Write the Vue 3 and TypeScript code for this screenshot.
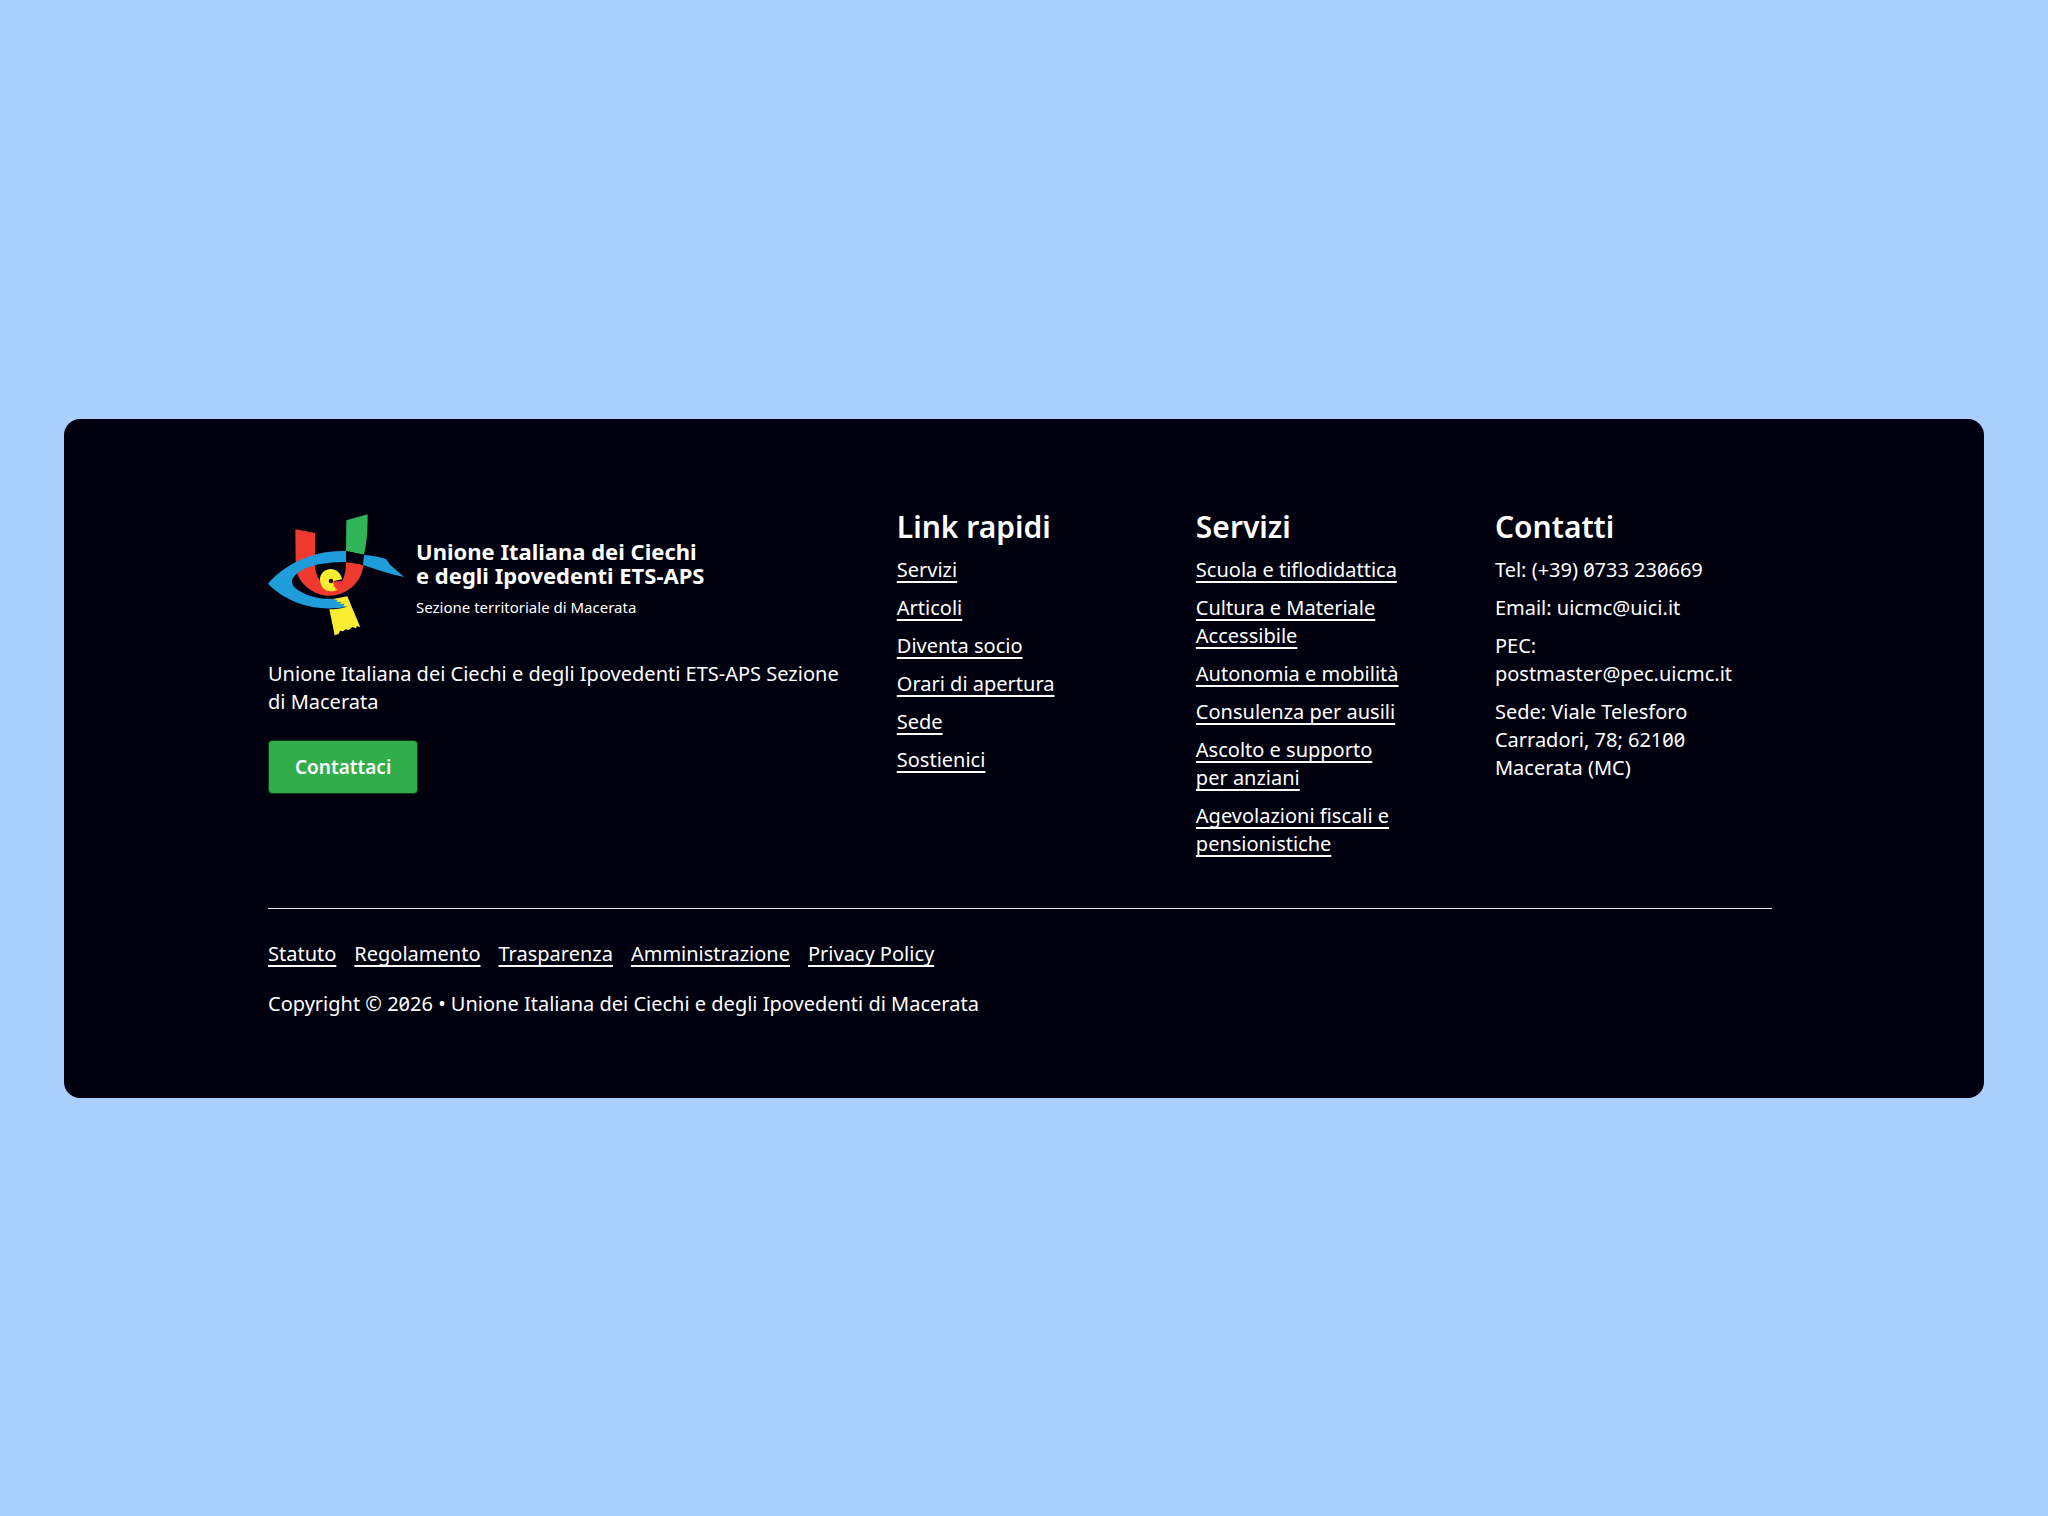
<script setup lang="ts">
interface NavLink {
  lines: string[]
  href: string
}

const quickLinks: NavLink[] = [
  { lines: ['Servizi'], href: '#servizi' },
  { lines: ['Articoli'], href: '#articoli' },
  { lines: ['Diventa socio'], href: '#diventa-socio' },
  { lines: ['Orari di apertura'], href: '#orari' },
  { lines: ['Sede'], href: '#sede' },
  { lines: ['Sostienici'], href: '#sostienici' },
]

const services: NavLink[] = [
  { lines: ['Scuola e tiflodidattica'], href: '#scuola' },
  { lines: ['Cultura e Materiale', 'Accessibile'], href: '#cultura' },
  { lines: ['Autonomia e mobilità'], href: '#autonomia' },
  { lines: ['Consulenza per ausili'], href: '#ausili' },
  { lines: ['Ascolto e supporto', 'per anziani'], href: '#anziani' },
  { lines: ['Agevolazioni fiscali e', 'pensionistiche'], href: '#agevolazioni' },
]

const contacts: string[][] = [
  ['Tel: (+39) 0733 230669'],
  ['Email: uicmc@uici.it'],
  ['PEC:', 'postmaster@pec.uicmc.it'],
  ['Sede: Viale Telesforo', 'Carradori, 78; 62100', 'Macerata (MC)'],
]

const legalLinks: NavLink[] = [
  { lines: ['Statuto'], href: '#statuto' },
  { lines: ['Regolamento'], href: '#regolamento' },
  { lines: ['Trasparenza'], href: '#trasparenza' },
  { lines: ['Amministrazione'], href: '#amministrazione' },
  { lines: ['Privacy Policy'], href: '#privacy' },
]

const columns = [
  { title: 'Link rapidi', links: quickLinks },
  { title: 'Servizi', links: services },
]
</script>

<template>
  <div class="page">
    <footer class="footer">
      <div class="top">
        <section class="about">
          <a class="brand" href="#home">
            <svg class="mark" viewBox="36 38 408 366" aria-hidden="true">
              <path fill="#f0392f" d="M118 84 L177 95 L177 192 C178 212 184 230 195 240 L258 240 C266 226 270 208 270 183 L322 190 C318 245 270 283 218 283 C166 281 120 240 119 190 Z" />
              <path fill="#2fb457" d="M271 57 L335 39 C335 85 333 120 324 160 L270 149 Z" />
              <path fill="#1f9ddb" d="M36 247 C80 195 165 145 270 149 L270 182 C215 182 150 190 118 221 C105 234 105 247 117 259 C145 283 190 295 236 292 L272 316 C240 323 195 323 160 315 C110 303 65 278 36 247 Z" />
              <path fill="#00000f" d="M270 149 L324 160 L321 192 C305 184 288 182 270 182 Z" />
              <path fill="#1f9ddb" d="M324 161 C350 163 370 166 391 174 L403 191 L444 227 C400 219 360 204 321 191 Z" />
              <path fill="#f9ed32" d="M232 293 L274 285 L313 378 L303 374 L300 381 L289 377 L279 386 L268 384 L262 390 L252 388 L248 398 L236 402 L220 324 C238 324 254 322 273 316 L261 313 L264 308 L250 307 L256 302 L240 301 L245 297 Z" />
              <path fill="#f9ed32" d="M258 234 C255 214 239 202 222 203 C203 205 191 219 192 237 C193 257 208 271 225 270 C234 270 240 267 245 263 L237 262 L239 257 L231 255 L235 249 L231 246 L234 239 Z" />
              <circle cx="225" cy="239" r="7" fill="#2a0808" />
            </svg>
            <span class="wordmark">
              <strong>Unione Italiana dei Ciechi<br />e degli Ipovedenti ETS-APS</strong>
              <small>Sezione territoriale di Macerata</small>
            </span>
          </a>
          <p class="description">Unione Italiana dei Ciechi e degli Ipovedenti ETS-APS Sezione<br />di Macerata</p>
          <button class="cta" type="button">Contattaci</button>
        </section>

        <nav v-for="column in columns" :key="column.title" :aria-label="column.title">
          <h2>{{ column.title }}</h2>
          <ul class="list">
            <li v-for="link in column.links" :key="link.href">
              <a :href="link.href"><template v-for="(line, i) in link.lines" :key="line"><br v-if="i > 0" />{{ line }}</template></a>
            </li>
          </ul>
        </nav>

        <section>
          <h2>Contatti</h2>
          <ul class="list">
            <li v-for="item in contacts" :key="item[0]">
              <template v-for="(line, i) in item" :key="line"><br v-if="i > 0" />{{ line }}</template>
            </li>
          </ul>
        </section>
      </div>

      <div class="bottom">
        <ul class="legal">
          <li v-for="link in legalLinks" :key="link.href">
            <a :href="link.href">{{ link.lines[0] }}</a>
          </li>
        </ul>
        <p>Copyright © 2026 • Unione Italiana dei Ciechi e degli Ipovedenti di Macerata</p>
      </div>
    </footer>
  </div>
</template>

<style>
body {
  margin: 0;
  background: #abcfff;
}
</style>

<style scoped>
.page {
  box-sizing: border-box;
  display: flex;
  align-items: center;
  min-height: 100vh;
  padding: 64px;
  background: #abcfff;
  color: #ffffff;
  font-family: "Noto Sans", sans-serif;
  font-size: 20px;
  line-height: 28px;
  font-variant-numeric: slashed-zero;
}

.footer {
  box-sizing: border-box;
  width: 100%;
  padding: 84px 212px 80px 204px;
  border-radius: 16px;
  background: #00000f;
}

.top {
  display: grid;
  grid-template-columns: 2.19fr 1fr 1fr 1fr;
  gap: 22px;
  padding-bottom: 50px;
  border-bottom: 1px solid #e4e6ea;
}

h2 {
  margin: 0 0 5px;
  font-size: 30px;
  line-height: 48px;
  font-weight: 600;
}

p {
  margin: 0;
}

ul {
  margin: 0;
  padding: 0;
  list-style: none;
}

.list {
  display: flex;
  flex-direction: column;
  gap: 10px;
}

.list a,
.legal a {
  color: inherit;
  text-decoration: underline;
  text-decoration-thickness: 2px;
  text-decoration-skip-ink: none;
  text-underline-offset: 4px;
}

.about {
  display: flex;
  flex-direction: column;
  align-items: flex-start;
  gap: 24px;
  padding-top: 11px;
}

.brand {
  display: flex;
  align-items: center;
  gap: 12px;
  color: inherit;
  text-decoration: none;
}

.mark {
  flex: none;
  width: 136px;
  height: 122px;
}

.wordmark {
  display: flex;
  flex-direction: column;
  gap: 10px;
  padding-top: 6px;
}

.wordmark strong {
  font-size: 22px;
  line-height: 24px;
  font-weight: 700;
}

.wordmark small {
  font-size: 15px;
  line-height: 20px;
}

.cta {
  padding: 12px 26px;
  border: 1px solid #0b3a14;
  border-radius: 4px;
  background: #32ad4b;
  color: #ffffff;
  font: inherit;
  font-size: 19px;
  font-weight: 600;
}

.bottom {
  display: flex;
  flex-direction: column;
  gap: 22px;
  padding-top: 31px;
}

.legal {
  display: flex;
  flex-wrap: wrap;
  gap: 18px;
}

@media (max-width: 1600px) {
  .footer {
    padding: 64px;
  }
}

@media (max-width: 1100px) {
  .page {
    padding: 24px;
  }

  .top {
    grid-template-columns: 1fr;
  }
}
</style>
